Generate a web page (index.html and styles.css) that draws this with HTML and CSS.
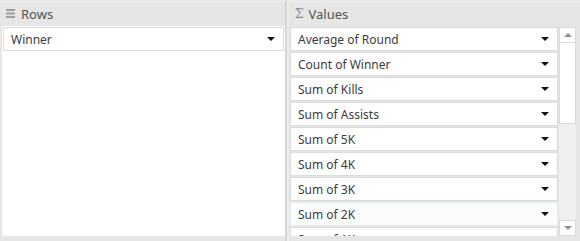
FILE: index.html
```
<!DOCTYPE html>
<html lang="en">
<head>
    <meta charset="UTF-8">
    <title>Fields</title>
    <link rel="stylesheet" href="styles.css">
</head>
<body>
<div class="areas">
    <div class="area area-rows">
        <div class="area-head">
            <svg class="head-icon" width="9" height="9" viewBox="0 0 9 9"><rect x="0" y="0" width="9" height="2" fill="#a0a0a0"/><rect x="0" y="3.5" width="9" height="2" fill="#a0a0a0"/><rect x="0" y="7" width="9" height="2" fill="#a0a0a0"/></svg>
            <span>Rows</span>
        </div>
        <div class="area-box">
            <div class="field"><span>Winner</span><i class="caret"></i></div>
        </div>
    </div>
    <div class="splitter"></div>
    <div class="area area-values">
        <div class="area-head">
            <span class="sigma">&Sigma;</span>
            <span>Values</span>
        </div>
        <div class="values-body">
            <div class="values-list">
                <div class="field"><span>Average of Round</span><i class="caret"></i></div>
                <div class="field"><span>Count of Winner</span><i class="caret"></i></div>
                <div class="field"><span>Sum of Kills</span><i class="caret"></i></div>
                <div class="field"><span>Sum of Assists</span><i class="caret"></i></div>
                <div class="field"><span>Sum of 5K</span><i class="caret"></i></div>
                <div class="field"><span>Sum of 4K</span><i class="caret"></i></div>
                <div class="field"><span>Sum of 3K</span><i class="caret"></i></div>
                <div class="field field-hover"><span>Sum of 2K</span><i class="caret"></i></div>
                <div class="field"><span>Sum of 1K</span><i class="caret"></i></div>
            </div>
            <div class="scrollbar">
                <div class="scroll-btn"><i class="arrow-up"></i></div>
                <div class="scroll-track"><div class="scroll-thumb"></div></div>
                <div class="scroll-btn"><i class="arrow-down"></i></div>
            </div>
        </div>
    </div>
</div>
</body>
</html>
```

FILE: styles.css
```
body{
    margin: 0;
    background: #e6e6e6;
    font-family: "Noto Sans", "Open Sans", sans-serif;
    font-size: 12px;
    color: #444;
}
.areas{
    display: flex;
    width: 580px;
    height: 241px;
    box-sizing: border-box;
    border-top: 1px solid #e6e6e6;
    background: #e6e6e6;
    overflow: hidden;
}
.area{
    display: flex;
    flex-direction: column;
    border-top: 1px solid #f2f2f2;
}
.area-rows{
    width: 285px;
}
.area-values{
    flex: 1;
    padding-right: 4px;
}
.area-head{
    height: 24px;
    display: flex;
    align-items: center;
    gap: 6px;
    padding-left: 6px;
    font-size: 13px;
    color: #555;
    box-sizing: border-box;
}
.head-icon{
    margin-top: -2px;
}
.sigma{
    color: #8a8a8a;
    font-family: "DejaVu Serif", serif;
    font-size: 12px;
    margin-right: -1px;
}
.area-box{
    flex: 1;
    margin-left: 2px;
    background: #fff;
    padding: 1px 0 0 1px;
    margin-bottom: 5px;
}
.splitter{
    width: 2px;
    margin-top: 1px;
    background: #d6d6d6;
    border-right: 2px solid #ececec;
}
.field{
    height: 24px;
    box-sizing: border-box;
    border: 1px solid #dcdcdc;
    background: #fff;
    display: flex;
    align-items: center;
    justify-content: space-between;
    padding: 0 7px 0 7px;
    margin-bottom: 1px;
    color: #3c3c3c;
}
.area-box .field{
    width: 281px;
}
.field-hover{
    background: #fbfdfc;
    border-color: #e4eee9;
}
.caret{
    width: 0;
    height: 0;
    border-left: 4px solid transparent;
    border-right: 4px solid transparent;
    border-top: 4px solid #111;
    margin-right: 1px;
}
.values-body{
    flex: 1;
    display: flex;
    gap: 1px;
    padding-left: 1px;
    margin-bottom: 5px;
    overflow: hidden;
}
.values-list{
    flex: 1;
    padding-top: 1px;
}
.scrollbar{
    width: 17px;
    display: flex;
    flex-direction: column;
    padding-top: 1px;
}
.scroll-btn{
    height: 16px;
    box-sizing: border-box;
    border: 1px solid #dadada;
    background: #fff;
    display: flex;
    align-items: center;
    justify-content: center;
}
.scroll-track{
    flex: 1;
    background: #efefef;
}
.scroll-thumb{
    height: 81px;
    box-sizing: border-box;
    background: #fff;
    border: 1px solid #dadada;
    border-top: none;
}
.arrow-up{
    width: 0;
    height: 0;
    border-left: 4px solid transparent;
    border-right: 4px solid transparent;
    border-bottom: 4px solid #909090;
}
.arrow-down{
    width: 0;
    height: 0;
    border-left: 4px solid transparent;
    border-right: 4px solid transparent;
    border-top: 4px solid #909090;
}
```
